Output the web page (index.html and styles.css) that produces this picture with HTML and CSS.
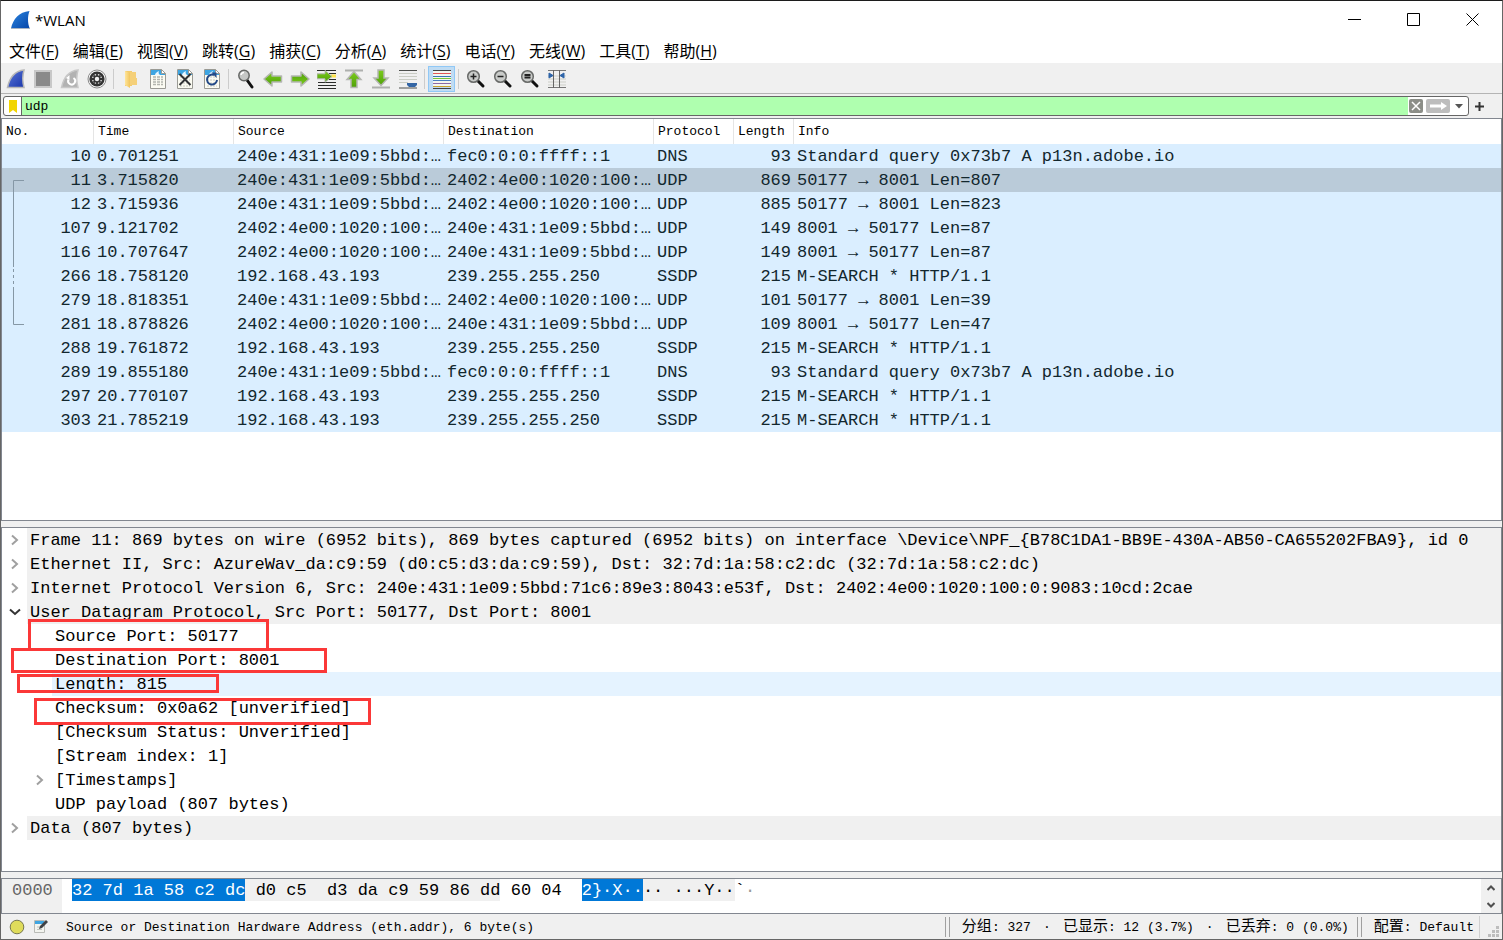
FILE: index.html
```html
<!DOCTYPE html>
<html lang="zh-CN">
<head>
<meta charset="utf-8">
<title>*WLAN</title>
<link rel="stylesheet" href="styles.css">
</head>
<body>
<svg class="defs" width="0" height="0" aria-hidden="true">
  <defs>
    <linearGradient id="fin-blue" x1="0" y1="0" x2="1" y2="1"><stop offset="0" stop-color="#2c86e0"/><stop offset="1" stop-color="#0645a8"/></linearGradient>
    <linearGradient id="fin-start" x1="0" y1="0" x2="1" y2="1"><stop offset="0" stop-color="#5b78d8"/><stop offset="1" stop-color="#1a36ac"/></linearGradient>
    <linearGradient id="folder" x1="0" y1="0" x2="1" y2="0"><stop offset="0" stop-color="#ffe59b"/><stop offset="1" stop-color="#f1c55d"/></linearGradient>
    <linearGradient id="green" x1="0" y1="0" x2="0" y2="1"><stop offset="0" stop-color="#7ccc1c"/><stop offset="1" stop-color="#4fa00a"/></linearGradient>
    <symbol id="doc" viewBox="0 0 20 20">
      <path d="M2.500.5h11l4 4v15h-15z" fill="#fbfbf2" stroke="#9a9a94"/>
      <path d="M3 1h10.500l3.500 3.500V6H3z" fill="#3ea5e2"/>
      <path d="M7 6c0-2 2-3 4-4-1 2 0 3 1 4z" fill="#e8f6ff"/>
      <path d="M13.500.5v4h4z" fill="#fff" stroke="#9a9a94"/>
    </symbol>
    <symbol id="lens" viewBox="0 0 20 20">
      <path d="M12 12l5 5" stroke="#111" stroke-width="3" stroke-linecap="round"/>
      <circle cx="7.500" cy="7.500" r="5.800" fill="#c9cbc9" stroke="#686a68" stroke-width="1.500"/>
    </symbol>
    <symbol id="arrow" viewBox="0 0 20 20">
      <path d="M1 10l8-7v4h9.500v6H9v4z" fill="url(#green)" stroke="#b4b6b2" stroke-width="1.500" stroke-linejoin="round"/>
    </symbol>
  </defs>
</svg>

<div class="window">
  <header class="titlebar">
    <svg class="logo" viewBox="0 0 20 20"><path d="M1 18.500C3 9 9 2 19.500 1c-2 5-2 12 .2 17.500z" fill="url(#fin-blue)"/><path d="M1 18.500h19" stroke="#a9b4c2"/></svg>
    <h1>*WLAN</h1>
    <div class="window-buttons">
      <button aria-label="最小化"><svg viewBox="0 0 13 13"><path d="M0 6.500h13"/></svg></button>
      <button aria-label="最大化"><svg viewBox="0 0 13 13"><path d="M.5.5h12v12H.5z"/></svg></button>
      <button aria-label="关闭"><svg viewBox="0 0 13 13"><path d="M.5.5l12 12M12.500.5l-12 12"/></svg></button>
    </div>
  </header>

  <nav class="menubar">
    <button>文件(<u>F</u>)</button>
    <button>编辑(<u>E</u>)</button>
    <button>视图(<u>V</u>)</button>
    <button>跳转(<u>G</u>)</button>
    <button>捕获(<u>C</u>)</button>
    <button>分析(<u>A</u>)</button>
    <button>统计(<u>S</u>)</button>
    <button>电话(<u>Y</u>)</button>
    <button>无线(<u>W</u>)</button>
    <button>工具(<u>T</u>)</button>
    <button>帮助(<u>H</u>)</button>
  </nav>

  <div class="toolbar" role="toolbar">
    <button aria-label="开始捕获"><svg viewBox="0 0 20 20"><path d="M1.500 18.500C3.500 9 9 2 18 1c-1.500 5-1.500 12 0 17.500z" fill="url(#fin-start)" stroke="#b7b7b7" stroke-width="1.500"/></svg></button>
    <button aria-label="停止捕获"><svg viewBox="0 0 20 20"><path d="M2 2h16v16H2z" fill="#8a8a8a" stroke="#c8c8c8" stroke-width="2"/></svg></button>
    <button aria-label="重新开始捕获"><svg viewBox="0 0 20 20"><path d="M1.500 18.500C3.500 9 9 2 18 1c-1.500 5-1.500 12 0 17.500z" fill="#b2b2b2" stroke="#c8c8c8" stroke-width="1.500"/><path d="M8.500 10.500a3.500 3.500 0 1 0 5-1.500" fill="none" stroke="#fff" stroke-width="2"/><path d="M9.500 6v5l-3.500-2z" fill="#fff"/></svg></button>
    <button aria-label="捕获选项"><svg viewBox="0 0 20 20"><circle cx="10" cy="10" r="9" fill="#f6f6f6" stroke="#8a8a8a"/><circle cx="10" cy="10" r="7.600" fill="#333"/><circle cx="10" cy="10" r="5" fill="#f4f4f4"/><path d="M10 5v10M5 10h10M6.500 6.500l7 7M13.500 6.500l-7 7" stroke="#333" stroke-width="1.800"/><circle cx="10" cy="10" r="3.700" fill="#333"/><circle cx="10" cy="10" r="2.200" fill="#f0f0f0"/></svg></button>
    <span class="separator"></span>
    <button aria-label="打开"><svg viewBox="0 0 20 20"><path d="M4 2h7v15H4z" fill="#f3cb6b"/><path d="M9 3h6v6h1v7H9z" fill="#f5d079"/><path d="M4 2l5 2v15l-5-3z" fill="url(#folder)"/></svg></button>
    <button aria-label="保存"><svg viewBox="0 0 20 20"><use href="#doc"/><path d="M5 8h3M9 8h3M13 8h2M5 10.500h3M9 10.500h3M13 10.500h2M5 13h3M9 13h3M13 13h2M5 15.500h3M9 15.500h3M13 15.500h2" stroke="#b3b5ae" stroke-width="1.500"/></svg></button>
    <button aria-label="关闭文件"><svg viewBox="0 0 20 20"><use href="#doc"/><path d="M5 8h10M5 11h10M5 14h10M5 17h10" stroke="#c8cac0" stroke-dasharray="2 1"/><path d="M4.500 5l11 11M15.500 5l-11 11" stroke="#303235" stroke-width="2"/></svg></button>
    <button aria-label="重新加载"><svg viewBox="0 0 20 20"><use href="#doc"/><path d="M5 8h10M5 11h10M5 14h10M5 17h10" stroke="#c8cac0" stroke-dasharray="2 1"/><path d="M12 6a5 5 0 1 0 3 5" fill="none" stroke="#244a87" stroke-width="2"/><path d="M9.500 3.500h5V9z" fill="#244a87"/></svg></button>
    <span class="separator"></span>
    <button aria-label="查找"><svg viewBox="0 0 20 20"><path d="M11 11l5 7" stroke="#111" stroke-width="3" stroke-linecap="round"/><circle cx="8" cy="6.500" r="5.200" fill="#c5c7c5" stroke="#676967" stroke-width="1.500"/><path d="M5 6a3 3 0 0 1 3-2.500" stroke="#fff" stroke-width="1.500" fill="none"/></svg></button>
    <button aria-label="后退"><svg viewBox="0 0 20 20"><use href="#arrow"/></svg></button>
    <button aria-label="前进"><svg viewBox="0 0 20 20"><use href="#arrow" transform="rotate(180 10 10)"/></svg></button>
    <button aria-label="转到分组"><svg viewBox="0 0 20 20"><path d="M0 1.500h19M1 13.500h18M1 16.500h18M1 19.500h18M12 4.500h7M12 10.500h7" stroke="#2b2d2b"/><path d="M14 5.500h5v3h-5z" fill="#ffe34a"/><path d="M15 7.500L8 1.500v3.300H0v5h8v3.400z" fill="url(#green)" stroke="#b4b6b2"/></svg></button>
    <button aria-label="第一个分组"><svg viewBox="0 0 20 20"><path d="M1 1.500h18" stroke="#aeb0ae" stroke-width="2"/><path d="M10 2.500l7 8h-4v8H7v-8H3z" fill="url(#green)" stroke="#b4b6b2" stroke-width="1.500"/></svg></button>
    <button aria-label="最后一个分组"><svg viewBox="0 0 20 20"><path d="M1 18.500h18" stroke="#aeb0ae" stroke-width="2"/><path d="M10 16.500l7-7.500h-4V1H7v8H3z" fill="url(#green)" stroke="#b4b6b2" stroke-width="1.500"/></svg></button>
    <button aria-label="自动滚动"><svg viewBox="0 0 20 20"><path d="M1 1.500h18M1 19h18" stroke="#4c4e4c"/><path d="M1 4.500h18M1 7.500h18M1 10.500h18M1 13.500h9" stroke="#c9ccc4"/><path d="M9 14h10v2l-2 2h-6l-2-2z" fill="#3465a4"/></svg></button>
    <span class="separator"></span>
    <button class="checked" aria-label="着色" aria-pressed="true"><svg viewBox="0 0 20 20"><path d="M1 2h18v16H1z" fill="#f4f6ee"/><path d="M1 1.500h18M1 19.500h18" stroke="#444"/><path d="M1 4.500h18" stroke="#e05656"/><path d="M1 7.500h18" stroke="#3b74b6"/><path d="M1 9.500h18" stroke="#76c63a"/><path d="M1 11.500h18" stroke="#4a7fc0"/><path d="M1 14.500h18" stroke="#8a6aa5"/><path d="M1 17.500h18" stroke="#c9a32c"/></svg></button>
    <span class="separator"></span>
    <button aria-label="放大"><svg viewBox="0 0 20 20"><use href="#lens"/><path d="M4.500 7.500h6M7.500 4.500v6" stroke="#222" stroke-width="1.500"/></svg></button>
    <button aria-label="缩小"><svg viewBox="0 0 20 20"><use href="#lens"/><path d="M4.500 7.500h6" stroke="#222" stroke-width="1.500"/></svg></button>
    <button aria-label="正常大小"><svg viewBox="0 0 20 20"><use href="#lens"/><path d="M4.500 6h6M4.500 8.500h6" stroke="#222" stroke-width="1.800"/></svg></button>
    <button aria-label="调整列宽"><svg viewBox="0 0 20 20"><path d="M1 1.500h18M1 18.500h18" stroke="#777"/><path d="M1 7h18M1 10h18M1 13h18M1 16h18" stroke="#cdcfc8"/><path d="M6.500 1v18M12.500 1v18" stroke="#666"/><path d="M2 4l4 2.500L2 9zM17 4l-4 2.500L17 9z" fill="#2f65a9" stroke="#2f65a9"/></svg></button>
  </div>

  <div class="filter-row">
    <div class="filter-box">
      <button class="bookmark" aria-label="书签"><svg viewBox="0 0 8 13"><path d="M0 0h8v13l-4-3-4 3z" fill="#f2d500"/></svg></button>
      <input type="text" aria-label="显示过滤器" value="udp">
      <button class="clear" aria-label="清除"><svg viewBox="0 0 14 14"><path d="M3 3l8 8M11 3l-8 8" stroke="#fff" stroke-width="1.500"/></svg></button>
      <button class="apply" aria-label="应用"><svg viewBox="0 0 24 14"><path d="M4 5.500h11V3l6 4-6 4V8.500H4z" fill="#fff"/></svg></button>
      <button class="history" aria-label="历史"><svg viewBox="0 0 8 5"><path d="M0 0h8L4 4.500z" fill="#555"/></svg></button>
    </div>
    <button class="add-filter" aria-label="添加"><svg viewBox="0 0 9 9"><path d="M0 4.500h9M4.500 0v9" stroke="#333" stroke-width="2"/></svg></button>
  </div>

  <main class="panes">
    <section class="pane packets">
      <table>
        <colgroup><col class="c-no"><col class="c-time"><col class="c-addr"><col class="c-addr"><col class="c-proto"><col class="c-len"><col></colgroup>
        <thead><tr><th>No.</th><th>Time</th><th>Source</th><th>Destination</th><th>Protocol</th><th>Length</th><th>Info</th></tr></thead>
        <tbody>
          <tr><td>10</td><td>0.701251</td><td>240e:431:1e09:5bbd:…</td><td>fec0:0:0:ffff::1</td><td>DNS</td><td>93</td><td>Standard query 0x73b7 A p13n.adobe.io</td></tr>
          <tr class="selected"><td>11</td><td>3.715820</td><td>240e:431:1e09:5bbd:…</td><td>2402:4e00:1020:100:…</td><td>UDP</td><td>869</td><td>50177 → 8001 Len=807</td></tr>
          <tr><td>12</td><td>3.715936</td><td>240e:431:1e09:5bbd:…</td><td>2402:4e00:1020:100:…</td><td>UDP</td><td>885</td><td>50177 → 8001 Len=823</td></tr>
          <tr><td>107</td><td>9.121702</td><td>2402:4e00:1020:100:…</td><td>240e:431:1e09:5bbd:…</td><td>UDP</td><td>149</td><td>8001 → 50177 Len=87</td></tr>
          <tr><td>116</td><td>10.707647</td><td>2402:4e00:1020:100:…</td><td>240e:431:1e09:5bbd:…</td><td>UDP</td><td>149</td><td>8001 → 50177 Len=87</td></tr>
          <tr><td>266</td><td>18.758120</td><td>192.168.43.193</td><td>239.255.255.250</td><td>SSDP</td><td>215</td><td>M-SEARCH * HTTP/1.1</td></tr>
          <tr><td>279</td><td>18.818351</td><td>240e:431:1e09:5bbd:…</td><td>2402:4e00:1020:100:…</td><td>UDP</td><td>101</td><td>50177 → 8001 Len=39</td></tr>
          <tr><td>281</td><td>18.878826</td><td>2402:4e00:1020:100:…</td><td>240e:431:1e09:5bbd:…</td><td>UDP</td><td>109</td><td>8001 → 50177 Len=47</td></tr>
          <tr><td>288</td><td>19.761872</td><td>192.168.43.193</td><td>239.255.255.250</td><td>SSDP</td><td>215</td><td>M-SEARCH * HTTP/1.1</td></tr>
          <tr><td>289</td><td>19.855180</td><td>240e:431:1e09:5bbd:…</td><td>fec0:0:0:ffff::1</td><td>DNS</td><td>93</td><td>Standard query 0x73b7 A p13n.adobe.io</td></tr>
          <tr><td>297</td><td>20.770107</td><td>192.168.43.193</td><td>239.255.255.250</td><td>SSDP</td><td>215</td><td>M-SEARCH * HTTP/1.1</td></tr>
          <tr><td>303</td><td>21.785219</td><td>192.168.43.193</td><td>239.255.255.250</td><td>SSDP</td><td>215</td><td>M-SEARCH * HTTP/1.1</td></tr>
        </tbody>
      </table>
      <svg class="conversation" width="12" height="146" viewBox="0 0 12 146" aria-hidden="true"><path d="M11 1.500H.5V88M.5 108v37.500H11" fill="none" stroke="#8597a5"/><path d="M.5 90v18" stroke="#8597a5" stroke-dasharray="3 3"/></svg>
    </section>

    <section class="pane tree">
      <ul>
        <li class="top"><button aria-label="展开"><svg viewBox="0 0 12 12"><path d="M3 1.500L8 6l-5 4.500"/></svg></button><span>Frame 11: 869 bytes on wire (6952 bits), 869 bytes captured (6952 bits) on interface \Device\NPF_{B78C1DA1-BB9E-430A-AB50-CA655202FBA9}, id 0</span></li>
        <li class="top"><button aria-label="展开"><svg viewBox="0 0 12 12"><path d="M3 1.500L8 6l-5 4.500"/></svg></button><span>Ethernet II, Src: AzureWav_da:c9:59 (d0:c5:d3:da:c9:59), Dst: 32:7d:1a:58:c2:dc (32:7d:1a:58:c2:dc)</span></li>
        <li class="top"><button aria-label="展开"><svg viewBox="0 0 12 12"><path d="M3 1.500L8 6l-5 4.500"/></svg></button><span>Internet Protocol Version 6, Src: 240e:431:1e09:5bbd:71c6:89e3:8043:e53f, Dst: 2402:4e00:1020:100:0:9083:10cd:2cae</span></li>
        <li class="top open"><button aria-label="折叠"><svg viewBox="0 0 12 12"><path d="M1 3.500L6 8l5-4.500"/></svg></button><span>User Datagram Protocol, Src Port: 50177, Dst Port: 8001</span></li>
        <li class="child"><span>Source Port: 50177</span></li>
        <li class="child"><span>Destination Port: 8001</span></li>
        <li class="child hover"><span>Length: 815</span></li>
        <li class="child"><span>Checksum: 0x0a62 [unverified]</span></li>
        <li class="child"><span>[Checksum Status: Unverified]</span></li>
        <li class="child"><span>[Stream index: 1]</span></li>
        <li class="child expandable"><button aria-label="展开"><svg viewBox="0 0 12 12"><path d="M3 1.500L8 6l-5 4.500"/></svg></button><span>[Timestamps]</span></li>
        <li class="child"><span>UDP payload (807 bytes)</span></li>
        <li class="top"><button aria-label="展开"><svg viewBox="0 0 12 12"><path d="M3 1.500L8 6l-5 4.500"/></svg></button><span>Data (807 bytes)</span></li>
      </ul>
      <div class="mark mark-source"></div>
      <div class="mark mark-destination"></div>
      <div class="mark mark-length"></div>
      <div class="mark mark-checksum"></div>
    </section>

    <section class="pane bytes">
      <div class="offset">0000</div>
      <pre class="hex"><mark>32 7d 1a 58 c2 dc</mark><span class="field"> d0 c5  d3 da c9 59 86 dd</span> 60 04</pre>
      <pre class="ascii"><mark>2}·X··</mark><span class="field">·· ···Y··</span>`<span class="dim">·</span></pre>
      <div class="scrollbar">
        <button aria-label="向上"><svg viewBox="0 0 8 6"><path d="M.5 5L4 1.500 7.500 5"/></svg></button>
        <button aria-label="向下"><svg viewBox="0 0 8 6"><path d="M.5 1L4 4.500 7.500 1"/></svg></button>
      </div>
    </section>
  </main>

  <footer class="statusbar">
    <button aria-label="专家信息"><svg viewBox="0 0 16 16"><circle cx="8" cy="8" r="6.800" fill="#dfdc5b" stroke="#77784f"/></svg></button>
    <button aria-label="捕获注释"><svg viewBox="0 0 16 16"><path d="M1.500 1.500h10v12h-10z" fill="#f3f4ef" stroke="#b9bbb6"/><path d="M2 2h9v3H2z" fill="#3ea5e2"/><path d="M4 8h5M4 10.500h5" stroke="#c2c4be"/><path d="M6 10l1-3 6-6 2 2-6 6z" fill="#3e4144"/></svg></button>
    <p class="message">Source or Destination Hardware Address (eth.addr), 6 byte(s)</p>
    <span class="divider"></span>
    <p class="counts"><span class="zh">分组</span>: 327<span class="dot">·</span><span class="zh">已显示</span>: 12 (3.7%)<span class="dot">·</span><span class="zh">已丢弃</span>: 0 (0.0%)</p>
    <span class="divider"></span>
    <p class="profile"><span class="zh">配置</span>: Default</p>
    <svg class="grip" viewBox="0 0 11 11"><path d="M8 0h3v3H8zM4 4h3v3H4zM8 4h3v3H8zM0 8h3v3H0zM4 8h3v3H4zM8 8h3v3H8z" fill="#bdbdbd"/></svg>
  </footer>
</div>
</body>
</html>
```
FILE: styles.css
```css
:root {
  --mono: "Liberation Mono", "Noto Sans CJK SC", monospace;
  --ui: "Open Sans", "Noto Sans CJK SC", sans-serif;
  --face: #f0f0f0;
  --edge: #828790;
}

* { box-sizing: border-box; }

body {
  margin: 0;
  background: #fff;
  color: #000;
  font-family: var(--mono);
  font-size: 17px;
}

button {
  margin: 0;
  padding: 0;
  border: 0;
  background: none;
  color: inherit;
  font: inherit;
}

p, ul, pre, h1 { margin: 0; padding: 0; }
ul { list-style: none; }
svg { display: block; flex: none; }
.defs { position: absolute; }

.window {
  display: flex;
  flex-direction: column;
  min-height: 100vh;
  border: 1px solid #666;
  border-top-color: #1c1c1c;
}

.titlebar {
  display: flex;
  align-items: center;
  height: 37px;
  padding-left: 9px;
  gap: 5px;
}
.titlebar .logo { width: 20px; height: 20px; }
.titlebar h1 {
  flex: 1;
  font: 400 15px/20px var(--ui);
}
.window-buttons { display: flex; align-self: stretch; }
.window-buttons button {
  display: grid;
  place-items: center;
  width: 59px;
}
.window-buttons svg {
  width: 13px;
  height: 13px;
  fill: none;
  stroke: #000;
}

.menubar {
  display: flex;
  gap: 14px;
  height: 26px;
  padding-left: 8px;
  border-bottom: 1px solid #f0f0f0;
  font: 16px/26px var(--ui);
}
.menubar u { text-underline-offset: 2px; }

.toolbar {
  display: flex;
  align-items: center;
  height: 30px;
  padding: 1px 0 1px 1px;
  border-bottom: 1px solid #b4b4b4;
  background: var(--face);
}
.toolbar button {
  display: grid;
  place-items: center;
  width: 27px;
  height: 26px;
}
.toolbar svg { width: 20px; height: 20px; }
.toolbar .checked {
  border: 1px solid #90c8f6;
  background: #c0dcf3;
}
.separator {
  width: 1px;
  height: 20px;
  margin: 0 3px;
  background: #ccc;
}

.filter-row {
  display: flex;
  align-items: center;
  height: 24px;
  padding: 0 18px 0 2px;
  gap: 6px;
  background: var(--face);
}
.filter-box {
  display: flex;
  align-items: center;
  flex: 1;
  height: 20px;
  border: 1px solid #666;
  border-radius: 3px;
  background: #fff;
}
.bookmark {
  display: grid;
  place-items: center;
  align-self: stretch;
  width: 18px;
  border-right: 1px solid #666;
}
.bookmark svg { width: 8px; height: 13px; }
.filter-box input {
  flex: 1;
  align-self: stretch;
  min-width: 0;
  padding: 1px 3px 0;
  border: 0;
  outline: 0;
  background: #afffaf;
  font: 13px/17px var(--mono);
}
.clear, .apply { height: 14px; border-radius: 2px; }
.clear { width: 14px; margin: 0 3px 0 1px; background: #8c8e88; }
.apply { width: 24px; background: #bdbdbd; }
.history { display: grid; place-items: center; width: 18px; }
.history svg { width: 8px; height: 5px; }
.add-filter svg { width: 9px; height: 9px; }

.panes {
  display: flex;
  flex: 1;
  flex-direction: column;
  gap: 6px;
  background: var(--face);
}
.pane {
  position: relative;
  border: 1px solid var(--edge);
  background: #fff;
}
.packets { flex: 403 0 auto; height: 403px; }
.tree { flex: 345 0 auto; height: 345px; }

table {
  width: 100%;
  border-collapse: separate;
  border-spacing: 0;
  table-layout: fixed;
}
.c-no { width: 92px; }
.c-time { width: 140px; }
.c-addr { width: 210px; }
.c-proto { width: 80px; }
.c-len { width: 60px; }
th {
  height: 25px;
  padding: 0 4px;
  border-right: 1px solid #e5e5e5;
  font: 400 13px/25px var(--mono);
  text-align: left;
}
th:last-child { border-right: 0; }
td {
  height: 24px;
  padding: 1px 3px 0;
  overflow: hidden;
  background: #daeeff;
  color: #12272e;
  line-height: 23px;
  white-space: nowrap;
}
td:nth-child(1), td:nth-child(6) { text-align: right; }
.selected td { background: #bacbd9; }
.conversation { position: absolute; top: 60px; left: 11px; }

.tree li {
  display: flex;
  line-height: 23px;
  white-space: nowrap;
}
.tree li button {
  display: grid;
  place-items: center;
  width: 25px;
}
.tree li svg {
  width: 12px;
  height: 12px;
  fill: none;
  stroke: #a0a0a0;
  stroke-width: 2;
}
.tree .open svg { stroke: #333; }
.tree li span { flex: 1; padding: 1px 0 0 3px; }
.tree .top span { background: var(--face); }
.tree .child { padding-left: 50px; }
.tree .expandable { padding-left: 25px; }
.tree .hover span { background: #e5f3ff; }

.mark { position: absolute; border: 3px solid #fb3838; }
.mark-source { top: 91px; left: 26px; width: 241px; height: 32px; }
.mark-destination { top: 120px; left: 9px; width: 316px; height: 25px; }
.mark-length { top: 146px; left: 15px; width: 202px; height: 19px; }
.mark-checksum { top: 170px; left: 32px; width: 337px; height: 27px; }

.bytes {
  display: flex;
  height: 36px;
  line-height: 24px;
}
.offset {
  width: 60px;
  padding-left: 10px;
  background: var(--face);
  color: #666;
}
.hex, .ascii { font: 17px/24px var(--mono); }
.hex { margin-left: 10px; }
.ascii { flex: 1; margin-left: 20px; }
.bytes mark, .field { display: inline-block; height: 22px; vertical-align: top; }
.bytes mark { background: #0078d7; color: #fff; }
.field { background: var(--face); }
.dim { color: #999; }
.scrollbar {
  display: flex;
  flex-direction: column;
  width: 20px;
  background: var(--face);
}
.scrollbar button { display: grid; flex: 1; place-items: center; }
.scrollbar svg {
  width: 8px;
  height: 6px;
  fill: none;
  stroke: #505050;
  stroke-width: 2;
}

.statusbar {
  display: flex;
  align-items: center;
  height: 25px;
  padding: 0 3px 0 8px;
  gap: 8px;
  background: var(--face);
  font-size: 13px;
  line-height: 22px;
  white-space: nowrap;
}
.statusbar button svg { width: 16px; height: 16px; }
.message { flex: 1; padding: 2px 0 0 9px; }
.divider {
  width: 5px;
  height: 20px;
  border: solid #a0a0a0;
  border-width: 0 1px;
}
.counts, .profile {
  display: flex;
  align-items: center;
  height: 22px;
  padding-left: 4px;
  padding-top: 2px;
  white-space: pre;
}
.profile { padding-right: 5px; border-right: 1px solid #d0d0d0; }
.zh { font-size: 15px; }
.dot { width: 32px; text-align: center; }
.grip { align-self: flex-end; width: 11px; height: 11px; margin-bottom: 2px; }
```
